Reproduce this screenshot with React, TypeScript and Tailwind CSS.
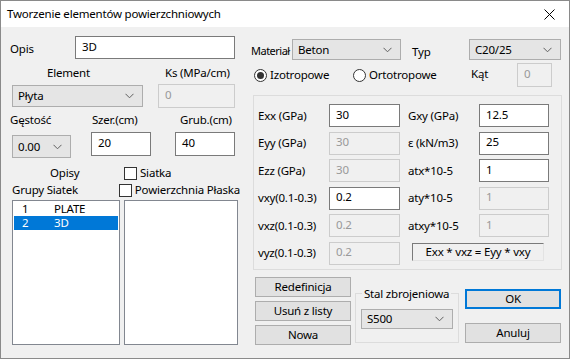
import React from "react";

const F = { fontFamily: '"Noto Sans", "Open Sans", sans-serif', letterSpacing: "-0.2px" };

function Chevron() {
  return (
    <svg width="9" height="6" viewBox="0 0 9 6" className="shrink-0">
      <polyline points="0.5,0.8 4.5,4.8 8.5,0.8" fill="none" stroke="#606060" strokeWidth="1" />
    </svg>
  );
}

function Select({ value, className }: { value: string; className: string }) {
  return (
    <div className={`flex items-center justify-between border border-[#adadad] bg-[#e5e5e5] pl-[5px] pr-[8px] text-black ${className}`}>
      <span className="leading-none">{value}</span>
      <Chevron />
    </div>
  );
}

function Input({ value, className, disabled }: { value: string; className: string; disabled?: boolean }) {
  return (
    <div
      className={`flex items-center pl-[6px] pb-[2px] ${
        disabled ? "border border-[#cccccc] bg-[#f0f0f0] text-[#999999]" : "border border-[#7a7a7a] bg-white text-black"
      } ${className}`}
    >
      <span className="leading-none">{value}</span>
    </div>
  );
}

function Check({ label }: { label: string }) {
  return (
    <div className="flex items-center gap-[3px]">
      <div className="w-[13px] h-[13px] border border-[#333] bg-white shrink-0" />
      <span className="leading-none">{label}</span>
    </div>
  );
}

function Radio({ label, checked }: { label: string; checked?: boolean }) {
  return (
    <div className="flex items-center gap-[3px]">
      <div className="w-[13px] h-[13px] rounded-full border border-[#333] bg-white flex items-center justify-center shrink-0">
        {checked && <div className="w-[7px] h-[7px] rounded-full bg-[#333]" />}
      </div>
      <span className="leading-none">{label}</span>
    </div>
  );
}

function Btn({ label, className }: { label: string; className: string }) {
  return (
    <div className={`flex items-center justify-center bg-[#e1e1e1] text-black ${className}`}>
      <span className="leading-none">{label}</span>
    </div>
  );
}

function ParamRow({ label, value, disabled, inputW, labelW }: { label: string; value: string; disabled?: boolean; inputW: string; labelW: string }) {
  return (
    <div className="flex items-center h-[23px]">
      <span className={`${labelW} leading-none`}>{label}</span>
      <Input value={value} disabled={disabled} className={`${inputW} h-[23px]`} />
    </div>
  );
}

export default function App() {
  return (
    <div style={F} className="w-[570px] h-[359px] border border-[#8a8a8a] bg-[#f0f0f0] flex flex-col text-[11.5px] text-black overflow-hidden whitespace-nowrap">
      {/* Title bar */}
      <div className="h-[26px] bg-white flex items-center justify-between pl-[6px] pr-[14px] shrink-0">
        <span className="leading-none">Tworzenie elementów powierzchniowych</span>
        <svg width="11" height="11" viewBox="0 0 11 11">
          <line x1="0.5" y1="0.5" x2="10.5" y2="10.5" stroke="#000" strokeWidth="1" />
          <line x1="10.5" y1="0.5" x2="0.5" y2="10.5" stroke="#000" strokeWidth="1" />
        </svg>
      </div>

      {/* Body */}
      <div className="flex flex-row flex-1">
        {/* Left column */}
        <div className="ml-[9px] w-[230px] flex flex-col">
          <div className="mt-[9px] h-[23px] flex items-center">
            <span className="w-[65px] leading-none pt-[3px]">Opis</span>
            <Input value="3D" className="w-[160px] h-[23px]" />
          </div>
          <div className="mt-[6px] h-[16px] flex items-center">
            <span className="ml-[37px] w-[118px] leading-none">Element</span>
            <span className="leading-none">Ks (MPa/cm)</span>
          </div>
          <div className="mt-[3px] h-[24px] flex items-center">
            <Select value="Płyta" className="ml-[2px] w-[131px] h-[22px]" />
            <Input value="0" disabled className="ml-[15px] w-[77px] h-[24px]" />
          </div>
          <div className="mt-[4px] h-[16px] flex items-center">
            <span className="w-[82px] leading-none">Gęstość</span>
            <span className="w-[88px] leading-none">Szer.(cm)</span>
            <span className="leading-none">Grub.(cm)</span>
          </div>
          <div className="mt-[4px] h-[26px] flex items-start">
            <Select value="0.00" className="ml-[2px] mt-[3px] w-[59px] h-[23px]" />
            <Input value="20" className="ml-[20px] w-[60px] h-[24px]" />
            <Input value="40" className="ml-[24px] w-[60px] h-[24px]" />
          </div>
          <div className="mt-[7px] h-[16px] flex items-center">
            <span className="ml-[40px] w-[74px] leading-none">Opisy</span>
            <Check label="Siatka" />
          </div>
          <div className="mt-[1px] h-[16px] flex items-center">
            <span className="ml-[2px] w-[112px] leading-none">Grupy Siatek</span>
            <Check label="Powierzchnia Płaska" />
          </div>
          <div className="mt-[2px] h-[145px] flex">
            <div className="ml-[2px] w-[108px] h-full border border-[#828790] bg-white px-[1px] pt-[1px] flex flex-col">
              <div className="h-[14px] flex items-center">
                <span className="w-[40px] pl-[8px] leading-none">1</span>
                <span className="leading-none">PLATE</span>
              </div>
              <div className="h-[14px] flex items-center bg-[#0078d7] text-white">
                <span className="w-[40px] pl-[8px] leading-none">2</span>
                <span className="leading-none">3D</span>
              </div>
            </div>
            <div className="ml-[4px] w-[114px] h-full border border-[#828790] bg-white" />
          </div>
        </div>

        {/* Right column */}
        <div className="ml-[11px] w-[310px] flex flex-col">
          <div className="mt-[12px] h-[21px] flex items-center">
            <span className="w-[41px] leading-none pt-[2px] text-[11px] tracking-[-0.5px]">Materiał</span>
            <Select value="Beton" className="w-[109px] h-[21px]" />
            <span className="ml-[11px] w-[57px] leading-none pt-[4px]">Typ</span>
            <Select value="C20/25" className="w-[92px] h-[21px]" />
          </div>
          <div className="mt-[3px] h-[24px] flex items-center">
            <div className="ml-[3px] w-[99px]">
              <Radio label="Izotropowe" checked />
            </div>
            <div className="w-[118px]">
              <Radio label="Ortotropowe" />
            </div>
            <span className="w-[46px] leading-none pb-[2px]">Kąt</span>
            <Input value="0" disabled className="w-[35px] h-[24px]" />
          </div>
          <div className="mt-[8px] ml-[2px] w-[309px] h-[175px] border border-[#dcdcdc] flex flex-row">
            <div className="pl-[4px] pt-[8px] w-[154px] flex flex-col gap-[4.5px]">
              <ParamRow label="Exx (GPa)" value="30" labelW="w-[71px]" inputW="w-[71px]" />
              <ParamRow label="Eyy (GPa)" value="30" disabled labelW="w-[71px]" inputW="w-[71px]" />
              <ParamRow label="Ezz (GPa)" value="30" disabled labelW="w-[71px]" inputW="w-[71px]" />
              <ParamRow label="vxy(0.1-0.3)" value="0.2" labelW="w-[71px]" inputW="w-[71px]" />
              <ParamRow label="vxz(0.1-0.3)" value="0.2" disabled labelW="w-[71px]" inputW="w-[71px]" />
              <ParamRow label="vyz(0.1-0.3)" value="0.2" disabled labelW="w-[71px]" inputW="w-[71px]" />
            </div>
            <div className="pt-[8px] flex flex-col gap-[4.5px]">
              <ParamRow label="Gxy (GPa)" value="12.5" labelW="w-[71px]" inputW="w-[70px]" />
              <ParamRow label="ε (kN/m3)" value="25" labelW="w-[71px]" inputW="w-[70px]" />
              <ParamRow label="atx*10-5" value="1" labelW="w-[71px]" inputW="w-[70px]" />
              <ParamRow label="aty*10-5" value="1" disabled labelW="w-[71px]" inputW="w-[70px]" />
              <ParamRow label="atxy*10-5" value="1" disabled labelW="w-[71px]" inputW="w-[70px]" />
              <div className="mt-[1px] ml-[4px] w-[132px] h-[18px] border-t border-l border-t-[#7a7a7a] border-l-[#7a7a7a] border-r border-b border-r-[#e3e3e3] border-b-[#e3e3e3] flex items-center justify-center">
                <span className="leading-none">Exx * vxz = Eyy * vxy</span>
              </div>
            </div>
          </div>
          <div className="mt-[6px] flex flex-row">
            <div className="ml-[4px] w-[96px] flex flex-col gap-[4px] pt-[1px]">
              <Btn label="Redefinicja" className="h-[20px] border border-[#adadad]" />
              <Btn label="Usuń z listy" className="h-[20px] border border-[#adadad]" />
              <Btn label="Nowa" className="h-[20px] border border-[#adadad]" />
            </div>
            <fieldset className="ml-[4px] mt-[12px] w-[103px] h-[55px] border border-[#dcdcdc] px-[5px] pt-[0px]">
              <legend className="px-[2px] ml-[1px] leading-none">Stal zbrojeniowa</legend>
              <Select value="S500" className="mt-[9px] w-[92px] h-[20px]" />
            </fieldset>
            <div className="ml-[6px] w-[96px] flex flex-col pt-[13px]">
              <Btn label="OK" className="h-[20px] border-2 border-[#0078d7]" />
              <Btn label="Anuluj" className="mt-[14px] h-[20px] border border-[#adadad]" />
            </div>
          </div>
        </div>
      </div>
    </div>
  );
}
